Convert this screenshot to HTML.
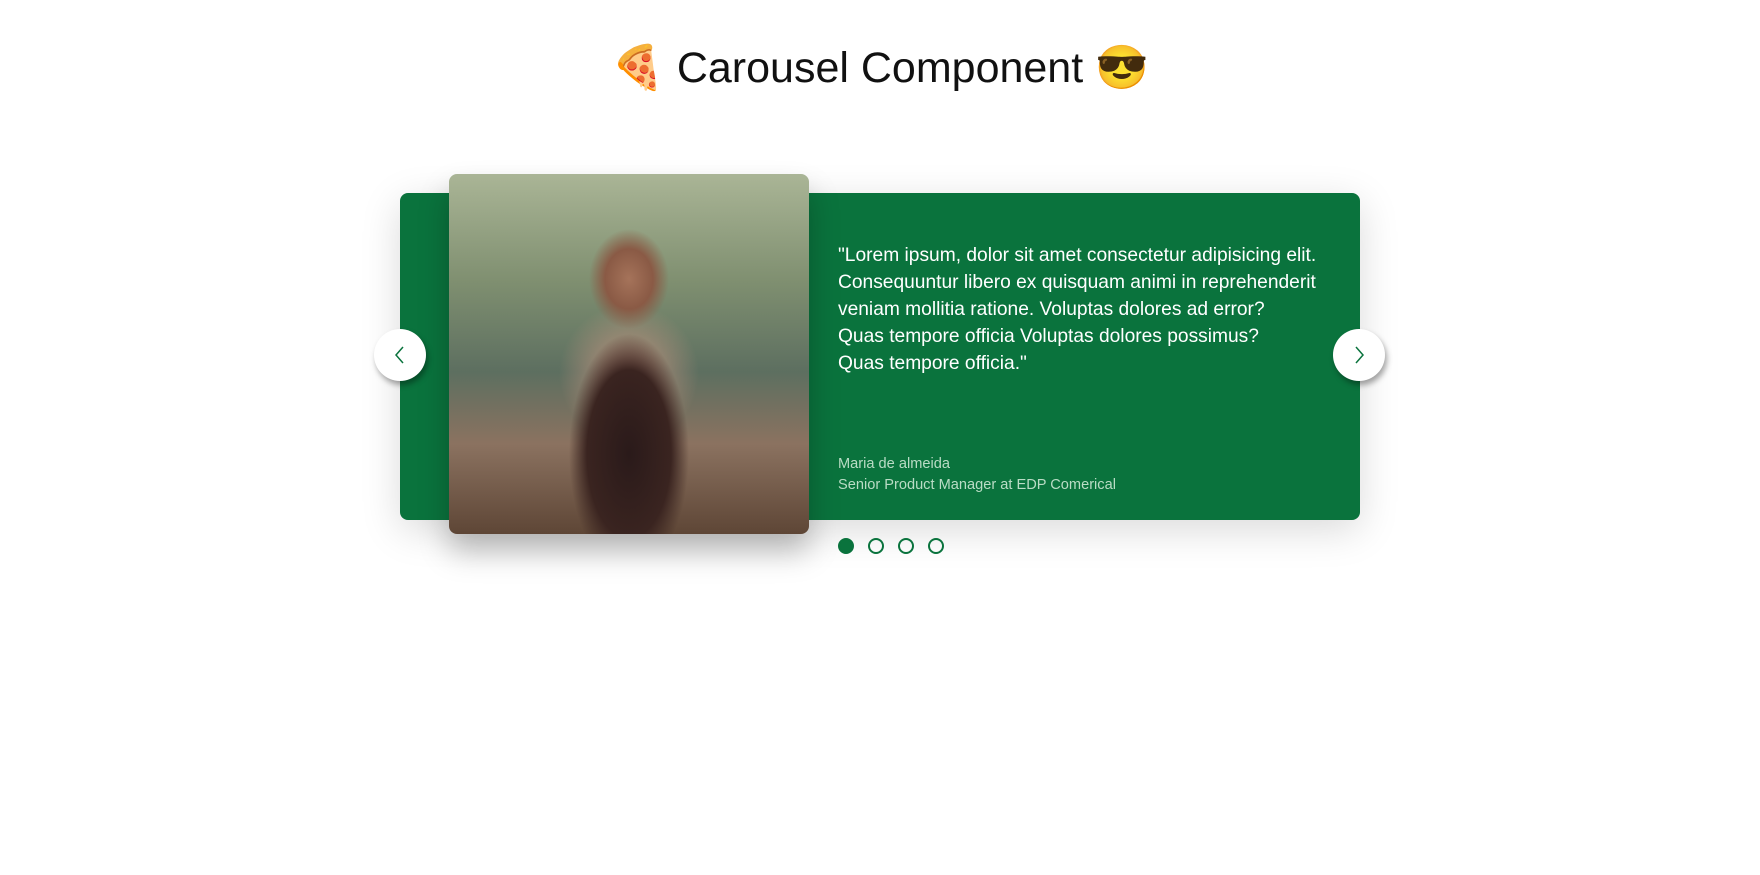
<!DOCTYPE html>
<html><head><meta charset="utf-8"><style>
body{margin:0;width:1760px;height:875px;background:#fff;font-family:"Liberation Sans",sans-serif;position:relative;overflow:hidden}
h1{position:absolute;top:40px;left:0;width:1760px;text-align:center;margin:0;font-weight:400;font-size:43px;color:#111;line-height:56px}
.card{position:absolute;left:400px;top:193px;width:960px;height:327px;background:#0a733d;border-radius:8px;box-shadow:0 10px 40px rgba(0,0,0,.15)}
.img{position:absolute;left:449px;top:174px;width:360px;height:360px;border-radius:8px;overflow:hidden;box-shadow:0 18px 30px rgba(0,0,0,.25);
background:
radial-gradient(ellipse 40px 50px at 180px 105px,#a5735a 0,#8a5a45 60%,transparent 100%),
radial-gradient(ellipse 60px 120px at 180px 280px,#2a1a1a 0,#3a2420 70%,transparent 100%),
radial-gradient(ellipse 70px 70px at 180px 200px,#c49480 0,transparent 100%),
linear-gradient(180deg,#aab596 0%,#7f8f70 30%,#5d6f60 55%,#8b7260 75%,#5e4636 100%)}
.txt{position:absolute;left:838px;top:242px;color:#fff;font-size:19.2px;line-height:27px;font-family:"Liberation Sans",sans-serif}
.who{position:absolute;left:838px;top:454px;color:#b9dcc5;font-size:14.6px;line-height:21px}
.arr{position:absolute;width:52px;height:52px;border-radius:50%;background:#fff;box-shadow:2px 4px 6px rgba(0,0,0,.35);top:329px}
.arr svg{position:absolute;left:16px;top:16px}
.dot{position:absolute;top:538px;width:12px;height:12px;border:2px solid #0a733d;border-radius:50%;box-sizing:content-box}
</style></head><body>
<h1>🍕 Carousel Component 😎</h1>
<div class="card"></div>
<div class="img"></div>
<div class="txt">"Lorem ipsum, dolor sit amet consectetur adipisicing elit.<br>Consequuntur libero ex quisquam animi in reprehenderit<br>veniam mollitia ratione. Voluptas dolores ad error?<br>Quas tempore officia Voluptas dolores possimus?<br>Quas tempore officia."</div>
<div class="who">Maria de almeida<br>Senior Product Manager at EDP Comerical</div>
<div class="arr" style="left:374px"><svg width="20" height="20" viewBox="0 0 20 20"><path d="M13 2 L6 10 L13 18" fill="none" stroke="#0a733d" stroke-width="1.5"/></svg></div>
<div class="arr" style="left:1333px"><svg width="20" height="20" viewBox="0 0 20 20"><path d="M7 2 L14 10 L7 18" fill="none" stroke="#0a733d" stroke-width="1.5"/></svg></div>
<div class="dot" style="left:838px;background:#0a733d"></div>
<div class="dot" style="left:868px"></div>
<div class="dot" style="left:898px"></div>
<div class="dot" style="left:928px"></div>
</body></html>
